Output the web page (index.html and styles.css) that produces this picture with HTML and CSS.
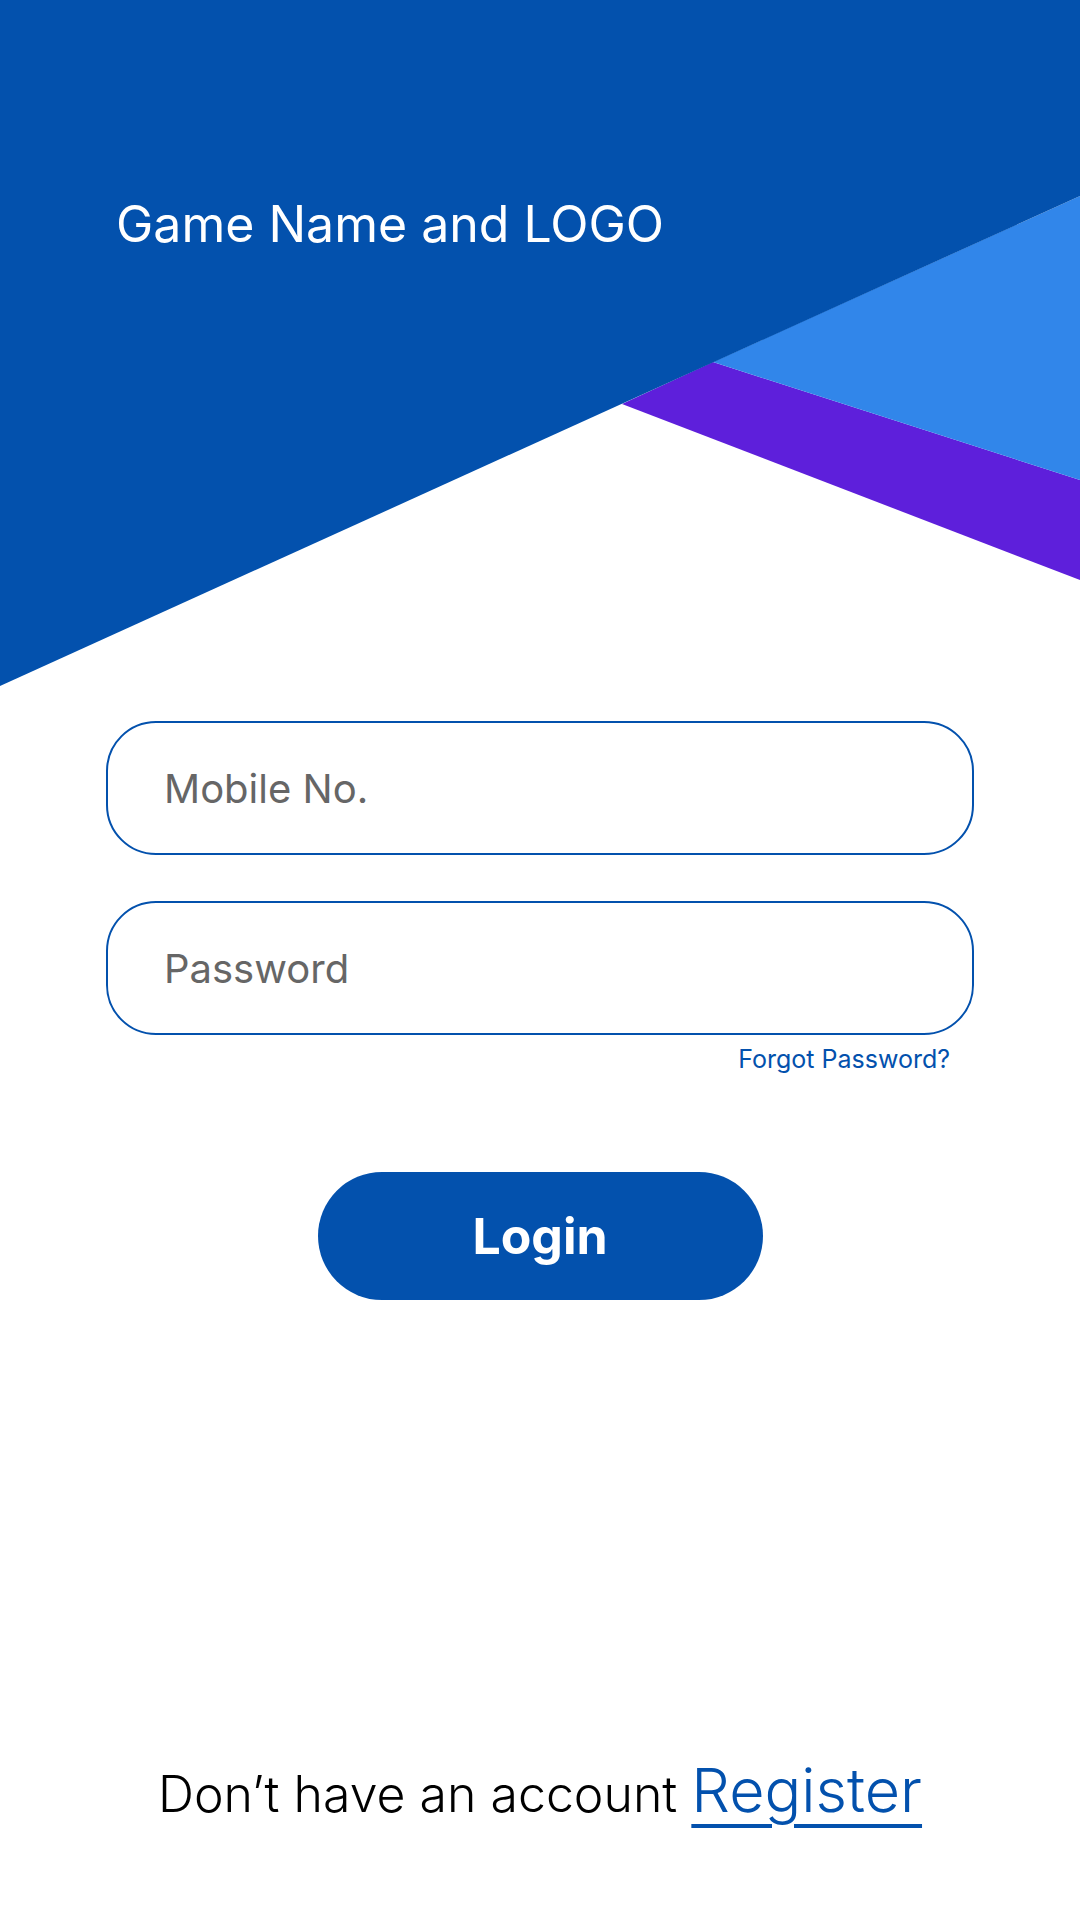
FILE: index.html
```html
<!DOCTYPE html>
<html lang="en">
<head>
<meta charset="utf-8">
<title>Login</title>
<link rel="stylesheet" href="styles.css">
</head>
<body>
<div class="page">
  <svg class="hero-bg" width="1080" height="700" viewBox="0 0 1080 700" aria-hidden="true">
    <rect x="0" y="0" width="1080" height="700" fill="#ffffff"/>
    <polygon points="622,404 713,362 1080,480 1080,580" fill="#5e1fdb"/>
    <polygon points="713,362 1080,196 1080,480" fill="#3186ea"/>
    <polygon points="0,0 1080,0 1080,196 0,686" fill="#0351ad"/>
  </svg>
  <header class="hero">
    <h1 class="title">Game Name and LOGO</h1>
  </header>
  <form class="form">
    <input class="field" type="text" placeholder="Mobile No.">
    <input class="field field-gap" type="password" placeholder="Password">
    <a class="forgot" href="#">Forgot Password?</a>
    <button class="login" type="button">Login</button>
  </form>
  <p class="signup">Don’t have an account <a class="register" href="#">Register</a></p>
</div>
</body>
</html>
```

FILE: styles.css
```css
html, body {
  margin: 0;
  padding: 0;
  background: #ffffff;
}
body {
  font-family: "Inter", "Roboto", "Liberation Sans", sans-serif;
}
.page {
  position: relative;
  width: 1080px;
  height: 1920px;
  overflow: hidden;
  display: flex;
  flex-direction: column;
}
.hero-bg {
  position: absolute;
  top: 0;
  left: 0;
  z-index: 0;
}
.hero {
  position: relative;
  z-index: 1;
  height: 721px;
  padding: 195px 0 0 116px;
  box-sizing: border-box;
}
.title {
  margin: 0;
  font-size: 50px;
  line-height: 58px;
  font-weight: 400;
  color: #ffffff;
  letter-spacing: 0;
}
.form {
  position: relative;
  z-index: 1;
  display: flex;
  flex-direction: column;
  padding: 0 106px;
  margin: 0;
}
.field {
  display: block;
  box-sizing: border-box;
  width: 868px;
  height: 134px;
  margin: 0;
  padding: 0 56px;
  border: 2px solid #0351ad;
  border-radius: 50px;
  background: #ffffff;
  font-family: "Inter", "Roboto", "Liberation Sans", sans-serif;
  font-size: 40px;
  color: #333333;
  outline: none;
}
.field::placeholder {
  color: #666666;
  opacity: 1;
}
.field-gap {
  margin-top: 46px;
}
.forgot {
  align-self: flex-end;
  margin: 9px 24px 0 0;
  font-size: 25px;
  line-height: 30px;
  color: #0351ad;
  text-decoration: none;
}
.login {
  align-self: center;
  margin-top: 98px;
  width: 445px;
  height: 128px;
  border: none;
  border-radius: 64px;
  background: #0351ad;
  color: #ffffff;
  font-family: "Inter", "Roboto", "Liberation Sans", sans-serif;
  font-size: 50px;
  font-weight: 700;
  cursor: pointer;
}
.signup {
  position: relative;
  z-index: 1;
  margin: 455px 0 0 0;
  text-align: center;
  font-size: 50px;
  line-height: 70px;
  font-weight: 300;
  color: #000000;
}
.register {
  font-size: 61px;
  color: #0351ad;
  text-decoration: underline;
  text-decoration-thickness: 4px;
  text-underline-offset: 12px;
}
```
